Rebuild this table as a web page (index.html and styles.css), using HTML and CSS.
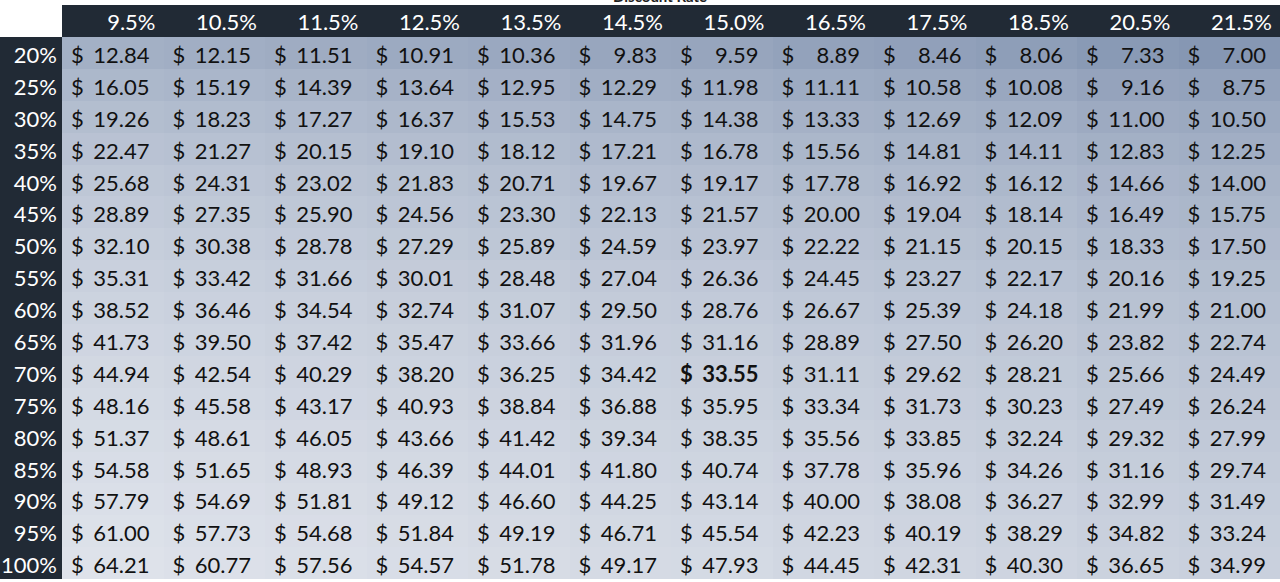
FILE: index.html
```html
<!DOCTYPE html>
<html lang="en">
<head>
<meta charset="utf-8">
<title>Discount Rate Sensitivity</title>
<link rel="stylesheet" href="styles.css">
</head>
<body>
<div class="sheet">
  <div class="title"><span class="title-text">Discount Rate</span></div>
  <div class="grid" id="grid"></div>
</div>
<script src="script.js"></script>
</body>
</html>
```

FILE: styles.css
```css
* { box-sizing: border-box; }
body {
  margin: 0;
  background: #ffffff;
  font-family: Lato, "Open Sans", "Noto Sans", sans-serif;
}
.sheet { width: 1280px; }
.title {
  display: block;
  height: 5px;
  overflow: hidden;
  text-align: center;
  padding-left: 40px;
}
.title-text {
  display: block;
  font-size: 15px;
  font-weight: 700;
  line-height: 15px;
  margin-top: -11px;
  color: #222;
}
.grid {
  display: grid;
  grid-template-columns: 62px repeat(12, 1fr);
  grid-template-rows: 32px repeat(17, 31.9px);
  font-size: 22px;
  line-height: 26px;
}
.corner { background: #ffffff; }
.hd {
  background: #212a35;
  color: #ffffff;
  text-align: right;
  padding: 4px 8px 0 0;
  white-space: nowrap;
}
.rl {
  background: #212a35;
  color: #ffffff;
  text-align: right;
  padding: 5px 5px 0 0;
  white-space: nowrap;
}
.cell {
  display: flex;
  justify-content: space-between;
  padding: 5px 14px 0 9px;
  color: #111111;
  white-space: nowrap;
}
.cell.bold { font-weight: 700; }
```

FILE: script.js
```js
const rates = ["9.5%","10.5%","11.5%","12.5%","13.5%","14.5%","15.0%","16.5%","17.5%","18.5%","20.5%","21.5%"];
const rows = [
  ["20%",[12.84,12.15,11.51,10.91,10.36,9.83,9.59,8.89,8.46,8.06,7.33,7.00]],
  ["25%",[16.05,15.19,14.39,13.64,12.95,12.29,11.98,11.11,10.58,10.08,9.16,8.75]],
  ["30%",[19.26,18.23,17.27,16.37,15.53,14.75,14.38,13.33,12.69,12.09,11.00,10.50]],
  ["35%",[22.47,21.27,20.15,19.10,18.12,17.21,16.78,15.56,14.81,14.11,12.83,12.25]],
  ["40%",[25.68,24.31,23.02,21.83,20.71,19.67,19.17,17.78,16.92,16.12,14.66,14.00]],
  ["45%",[28.89,27.35,25.90,24.56,23.30,22.13,21.57,20.00,19.04,18.14,16.49,15.75]],
  ["50%",[32.10,30.38,28.78,27.29,25.89,24.59,23.97,22.22,21.15,20.15,18.33,17.50]],
  ["55%",[35.31,33.42,31.66,30.01,28.48,27.04,26.36,24.45,23.27,22.17,20.16,19.25]],
  ["60%",[38.52,36.46,34.54,32.74,31.07,29.50,28.76,26.67,25.39,24.18,21.99,21.00]],
  ["65%",[41.73,39.50,37.42,35.47,33.66,31.96,31.16,28.89,27.50,26.20,23.82,22.74]],
  ["70%",[44.94,42.54,40.29,38.20,36.25,34.42,33.55,31.11,29.62,28.21,25.66,24.49]],
  ["75%",[48.16,45.58,43.17,40.93,38.84,36.88,35.95,33.34,31.73,30.23,27.49,26.24]],
  ["80%",[51.37,48.61,46.05,43.66,41.42,39.34,38.35,35.56,33.85,32.24,29.32,27.99]],
  ["85%",[54.58,51.65,48.93,46.39,44.01,41.80,40.74,37.78,35.96,34.26,31.16,29.74]],
  ["90%",[57.79,54.69,51.81,49.12,46.60,44.25,43.14,40.00,38.08,36.27,32.99,31.49]],
  ["95%",[61.00,57.73,54.68,51.84,49.19,46.71,45.54,42.23,40.19,38.29,34.82,33.24]],
  ["100%",[64.21,60.77,57.56,54.57,51.78,49.17,47.93,44.45,42.31,40.30,36.65,34.99]]
];
const lo = [134,151,179], hi = [222,226,234];
const vmin = 7.00, vmax = 64.21;
function shade(v) {
  let t = Math.log(v / vmin) / Math.log(vmax / vmin);
  t = Math.pow(Math.max(0, Math.min(1, t)), 0.85);
  const c = lo.map((a, i) => Math.round(a + (hi[i] - a) * t));
  return "rgb(" + c.join(",") + ")";
}
const grid = document.getElementById("grid");
function el(cls, text) {
  const d = document.createElement("div");
  d.className = cls;
  if (text !== undefined) d.textContent = text;
  return d;
}
grid.appendChild(el("corner"));
rates.forEach(r => grid.appendChild(el("hd", r)));
rows.forEach(([label, vals], ri) => {
  grid.appendChild(el("rl", label));
  vals.forEach((v, ci) => {
    const c = el("cell" + (ri === 10 && ci === 6 ? " bold" : ""));
    c.style.background = shade(v);
    const s = document.createElement("span");
    s.textContent = "$";
    const n = document.createElement("span");
    n.textContent = v.toFixed(2);
    c.appendChild(s);
    c.appendChild(n);
    grid.appendChild(c);
  });
});
```
